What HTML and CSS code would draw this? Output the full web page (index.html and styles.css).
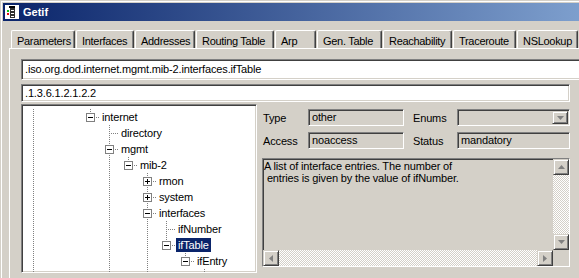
FILE: index.html
```html
<!DOCTYPE html>
<html lang="en">

<head>
    <meta charset="UTF-8">
    <meta name="viewport" content="width=device-width, initial-scale=1.0">
    <title>Getif</title>
    <link rel="stylesheet" href="styles.css">
</head>

<body>
    <div class="window">
        <div class="frame">
            <div class="titlebar">
                <svg class="app-icon" width="14" height="14" viewBox="0 0 14 14">
                    <rect width="14" height="14" fill="#fff" />
                    <rect x="4" y="1" width="6" height="2" fill="#000" />
                    <rect x="5" y="3" width="5" height="10" fill="#303030" />
                    <rect x="6" y="5" width="3" height="1" fill="#fff" />
                    <rect x="6" y="8" width="3" height="1" fill="#fff" />
                    <rect x="6" y="11" width="3" height="1" fill="#fff" />
                    <rect x="2" y="5" width="2" height="2" fill="#10c010" />
                    <rect x="2" y="8" width="2" height="2" fill="#e01010" />
                </svg>
                <span class="title">Getif</span>
            </div>

            <div class="client">
                <div class="tabs">
                    <div class="tab">Parameters</div>
                    <div class="tab">Interfaces</div>
                    <div class="tab">Addresses</div>
                    <div class="tab">Routing Table</div>
                    <div class="tab">Arp</div>
                    <div class="tab">Gen. Table</div>
                    <div class="tab">Reachability</div>
                    <div class="tab">Traceroute</div>
                    <div class="tab">NSLookup</div>
                </div>

                <div class="page">
                    <div class="sunken combo">.iso.org.dod.internet.mgmt.mib-2.interfaces.ifTable</div>
                    <div class="sunken oid">.1.3.6.1.2.1.2.2</div>

                    <div class="browser">
                        <div class="sunken tree">
                            <div class="row">
                                <span class="g v"></span><span class="g"></span><span class="g"></span>
                                <span class="g e"><i class="bx"></i></span>
                                <span class="label">internet</span>
                            </div>
                            <div class="row">
                                <span class="g v"></span><span class="g"></span><span class="g"></span><span class="g"></span>
                                <span class="g t"></span>
                                <span class="label">directory</span>
                            </div>
                            <div class="row">
                                <span class="g v"></span><span class="g"></span><span class="g"></span><span class="g"></span>
                                <span class="g t"><i class="bx"></i></span>
                                <span class="label">mgmt</span>
                            </div>
                            <div class="row">
                                <span class="g v"></span><span class="g"></span><span class="g"></span><span class="g"></span>
                                <span class="g v"></span>
                                <span class="g e"><i class="bx"></i></span>
                                <span class="label">mib-2</span>
                            </div>
                            <div class="row">
                                <span class="g v"></span><span class="g"></span><span class="g"></span><span class="g"></span>
                                <span class="g v"></span><span class="g"></span>
                                <span class="g t"><i class="bx plus"></i></span>
                                <span class="label">rmon</span>
                            </div>
                            <div class="row">
                                <span class="g v"></span><span class="g"></span><span class="g"></span><span class="g"></span>
                                <span class="g v"></span><span class="g"></span>
                                <span class="g t"><i class="bx plus"></i></span>
                                <span class="label">system</span>
                            </div>
                            <div class="row">
                                <span class="g v"></span><span class="g"></span><span class="g"></span><span class="g"></span>
                                <span class="g v"></span><span class="g"></span>
                                <span class="g t"><i class="bx"></i></span>
                                <span class="label">interfaces</span>
                            </div>
                            <div class="row">
                                <span class="g v"></span><span class="g"></span><span class="g"></span><span class="g"></span>
                                <span class="g v"></span><span class="g"></span><span class="g v"></span>
                                <span class="g t"></span>
                                <span class="label">ifNumber</span>
                            </div>
                            <div class="row">
                                <span class="g v"></span><span class="g"></span><span class="g"></span><span class="g"></span>
                                <span class="g v"></span><span class="g"></span><span class="g v"></span>
                                <span class="g e"><i class="bx"></i></span>
                                <span class="label selected">ifTable</span>
                            </div>
                            <div class="row">
                                <span class="g v"></span><span class="g"></span><span class="g"></span><span class="g"></span>
                                <span class="g v"></span><span class="g"></span><span class="g v"></span><span class="g"></span>
                                <span class="g e"><i class="bx"></i></span>
                                <span class="label">ifEntry</span>
                            </div>
                            <!-- next row is scrolled below the edge, only its connector peeks in -->
                            <div class="row">
                                <span class="g v"></span><span class="g"></span><span class="g"></span><span class="g"></span>
                                <span class="g v"></span><span class="g"></span><span class="g v"></span><span class="g"></span><span class="g"></span>
                                <span class="g t"></span>
                            </div>
                        </div>

                        <div class="details">
                            <span class="lbl">Type</span>
                            <div class="sunken field">other</div>
                            <span class="lbl lbl-2">Enums</span>
                            <div class="sunken field select">
                                <span class="btn drop">
                                    <svg width="7" height="4" viewBox="0 0 7 4"><polygon points="0,0 7,0 3.5,4" fill="#808080" /></svg>
                                </span>
                            </div>

                            <span class="lbl">Access</span>
                            <div class="sunken field">noaccess</div>
                            <span class="lbl lbl-2">Status</span>
                            <div class="sunken field">mandatory</div>

                            <div class="sunken memo">
                                <div class="memo-text">A list of interface entries. The number of
 entries is given by the value of ifNumber.</div>
                                <div class="vscroll">
                                    <span class="btn">
                                        <svg width="7" height="4" viewBox="0 0 7 4"><polygon points="0,4 7,4 3.5,0" fill="#808080" /></svg>
                                    </span>
                                    <span class="track"></span>
                                    <span class="btn">
                                        <svg width="7" height="4" viewBox="0 0 7 4"><polygon points="0,0 7,0 3.5,4" fill="#808080" /></svg>
                                    </span>
                                </div>
                                <div class="hscroll">
                                    <span class="btn">
                                        <svg width="4" height="7" viewBox="0 0 4 7"><polygon points="4,0 4,7 0,3.5" fill="#808080" /></svg>
                                    </span>
                                    <span class="track"></span>
                                    <span class="btn">
                                        <svg width="4" height="7" viewBox="0 0 4 7"><polygon points="0,0 0,7 4,3.5" fill="#808080" /></svg>
                                    </span>
                                </div>
                                <div class="corner"></div>
                            </div>
                        </div>
                    </div>
                </div>
            </div>
        </div>
    </div>
</body>

</html>
```

FILE: styles.css
```css
html {
    font-family: "Liberation Sans", Arial, sans-serif;
    font-size: 11px;
    letter-spacing: -0.15px;
    color: #000;
}

body {
    margin: 0;
    background: #d4d0c8;
    overflow: hidden;
}

.window {
    width: 660px;
    height: 278px;
    padding: 1px 0 0 1px;
    box-sizing: border-box;
}

.frame {
    height: 100%;
    border-top: 1px solid #fff;
    border-left: 1px solid #fff;
    padding: 1px 0 0 1px;
    box-sizing: border-box;
}

/* title bar */
.titlebar {
    height: 18px;
    display: flex;
    align-items: center;
    padding-left: 2px;
    background: linear-gradient(to right, #0a246a 0, #a6caf0 780px);
}

.app-icon {
    display: block;
}

.title {
    margin-left: 4px;
    color: #fff;
    font-weight: bold;
    font-size: 11px;
    letter-spacing: 0;
}

.client {
    padding: 9px 0 0 6px;
}

/* tabs */
.tabs {
    display: grid;
    grid-template-columns: 64px 58px 60px 78px 41px 65px 69px 63px 61px;
    column-gap: 1px;
    padding-left: 2px;
}

.tab {
    height: 18px;
    box-sizing: border-box;
    padding: 4px 0 0 5px;
    line-height: 13px;
    white-space: nowrap;
    letter-spacing: -0.3px;
    border-top: 1px solid #fff;
    border-left: 1px solid #fff;
    border-right: 1px solid #404040;
    box-shadow: inset -1px 0 #808080;
    border-radius: 2px 2px 0 0;
}

.page {
    border-top: 1px solid #fff;
    border-left: 1px solid #fff;
    padding: 10px 0 0 11px;
    height: 230px;
}

/* sunken 3d border used by edits, tree and memo */
.sunken {
    box-sizing: border-box;
    border: 1px solid;
    border-color: #808080 #fff #fff #808080;
    box-shadow: inset 1px 1px #404040, inset -1px -1px #d4d0c8;
}

.combo {
    width: 620px;
    height: 21px;
    padding: 0 3px;
    line-height: 19px;
    background: #fff;
}

.oid {
    width: 549px;
    height: 18px;
    margin-top: 4px;
    padding: 0 3px;
    line-height: 16px;
    background: #fff;
}

.browser {
    display: flex;
    margin-top: 2px;
    width: 549px;
    height: 169px;
}

/* tree view */
.tree {
    width: 236px;
    flex: none;
    background: #fff;
    padding: 4px 0 0 2px;
    overflow: hidden;
}

.row {
    height: 16px;
    display: flex;
    align-items: center;
}

.g {
    position: relative;
    flex: none;
    width: 19px;
    height: 16px;
}

.g.v::before,
.g.t::before,
.g.e::before {
    content: "";
    position: absolute;
    left: 9px;
    top: 0;
    width: 1px;
    height: 16px;
    background: repeating-linear-gradient(to bottom, #808080 0 1px, transparent 1px 2px);
}

.g.e::before {
    height: 9px;
}

.g.t::after,
.g.e::after {
    content: "";
    position: absolute;
    left: 9px;
    top: 8px;
    width: 10px;
    height: 1px;
    background: repeating-linear-gradient(to right, #808080 0 1px, transparent 1px 2px);
}

.bx {
    position: absolute;
    z-index: 1;
    left: 5px;
    top: 4px;
    width: 9px;
    height: 9px;
    box-sizing: border-box;
    border: 1px solid #808080;
    background: #fff;
}

.bx::before {
    content: "";
    position: absolute;
    left: 1px;
    top: 3px;
    width: 5px;
    height: 1px;
    background: #000;
}

.bx.plus::after {
    content: "";
    position: absolute;
    left: 3px;
    top: 1px;
    width: 1px;
    height: 5px;
    background: #000;
}

.label {
    padding: 0 2px;
    line-height: 14px;
    white-space: nowrap;
}

.label.selected {
    background: #0a246a;
    color: #fff;
}

/* details on the right */
.details {
    flex: 1;
    display: grid;
    grid-template-columns: 45px 96px 53px 113px;
    grid-template-rows: 17px 17px 112px;
    row-gap: 6px;
    align-content: start;
    padding: 5px 0 0 6px;
}

.lbl {
    align-self: center;
}

.lbl-2 {
    padding-left: 9px;
}

.field {
    padding: 0 3px;
    line-height: 15px;
    background: #d4d0c8;
    white-space: nowrap;
}

.select {
    display: flex;
    justify-content: flex-end;
    padding: 1px;
}

.btn {
    display: flex;
    align-items: center;
    justify-content: center;
    flex: none;
    width: 16px;
    height: 16px;
    box-sizing: border-box;
    background: #d4d0c8;
    border: 1px solid;
    border-color: #d4d0c8 #404040 #404040 #d4d0c8;
    box-shadow: inset 1px 1px #fff, inset -1px -1px #808080;
}

.btn svg {
    display: block;
}

.drop {
    height: 13px;
}

.memo {
    grid-column: 1 / -1;
    margin: 3px 0 0 -1px;
    background: #d4d0c8;
    display: grid;
    grid-template-columns: 1fr 16px;
    grid-template-rows: 1fr 16px;
}

.memo-text {
    padding: 1px 1px;
    line-height: 12px;
    white-space: pre;
    overflow: hidden;
}

.vscroll {
    display: flex;
    flex-direction: column;
}

.hscroll {
    display: flex;
}

.track {
    flex: 1;
    background: repeating-conic-gradient(#fff 0 25%, #d4d0c8 0 50%) 0 0 / 2px 2px;
}

.corner {
    background: #d4d0c8;
}
```
